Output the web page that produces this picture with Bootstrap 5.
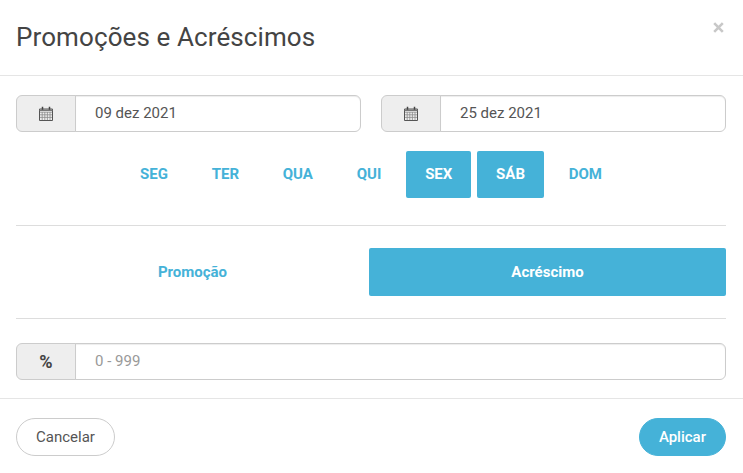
<!DOCTYPE html>
<html lang="pt">
<head>
  <meta charset="UTF-8" />
  <title>Promoções e Acréscimos</title>
  <meta name="viewport" content="width=device-width, initial-scale=1">
  <link href="https://cdn.jsdelivr.net/npm/bootstrap@5.3.0/dist/css/bootstrap.min.css" rel="stylesheet">

  <style>
    body {
      font-family: Roboto, "Liberation Sans", sans-serif;
      font-size: 15px;
      color: #555;
      background: #fff;
      height: 473px;
      overflow: hidden;
    }

    .promo-header {
      height: 76px;
      padding: 0 19px 0 16px;
      border-bottom: 1px solid #e5e5e5;
    }

    .promo-title {
      font-size: 26px;
      font-weight: 400;
      letter-spacing: .1px;
      color: #444;
      margin: 0;
    }

    .promo-close {
      background: none;
      border: 0;
      padding: 0;
      color: #c8c8c8;
      line-height: 1;
      margin-bottom: 21px;
      display: flex;
    }

    .promo-body {
      padding: 19px 17px 0 16px;
    }

    .promo-dates {
      gap: 20px;
    }

    .promo-field {
      height: 37px;
    }

    .promo-field .input-group-text {
      width: 60px;
      justify-content: center;
      padding: 0;
      background: #eee;
      border: 1px solid #ccc;
      border-radius: 6px 0 0 6px;
      color: #444;
    }

    .promo-field .form-control {
      font-size: 15px;
      color: #555;
      padding: 0 19px;
      border: 1px solid #ccc;
      border-radius: 0 6px 6px 0;
      box-shadow: inset 0 1px 1px rgba(0, 0, 0, .075);
    }

    .promo-field .form-control::placeholder {
      color: #999;
    }

    .promo-field .percent-sign {
      font-size: 18px;
      font-weight: 700;
    }

    .day-row {
      margin-top: 19px;
      gap: 6px;
    }

    .day-btn,
    .type-btn {
      font-size: 15px;
      font-weight: 700;
      color: #45b2d8;
      background: #fff;
      border: 0;
      border-radius: 2px;
    }

    .day-btn {
      height: 47px;
      padding: 0 18.9px;
    }

    .type-btn {
      height: 48px;
      padding: 0;
    }

    .day-btn.is-on,
    .type-btn.is-on {
      color: #fff;
      background: #45b2d8;
    }

    .promo-rule {
      margin: 0;
      border: 0;
      border-top: 1px solid #ddd;
      opacity: 1;
    }

    .rule-days {
      margin-top: 27px;
    }

    .type-row {
      margin-top: 22px;
      display: grid;
      grid-template-columns: 353px 357px;
    }

    .rule-type {
      margin-top: 22px;
    }

    .percent-row {
      margin-top: 24px;
    }

    .promo-footer {
      margin-top: 18px;
      padding: 19px 17px 0 16px;
      border-top: 1px solid #e5e5e5;
    }

    .foot-btn {
      height: 38px;
      font-size: 15px;
      padding: 0 19px;
      border-radius: 19px;
    }

    .foot-cancel {
      color: #555;
      background: #fff;
      border: 1px solid #ccc;
    }

    .foot-apply {
      color: #fff;
      font-weight: 500;
      background: #45b2d8;
      border: 1px solid #45b2d8;
    }
  </style>
</head>
<body>

  <!-- Header -->
  <div class="promo-header d-flex justify-content-between align-items-center">
    <h4 class="promo-title">Promoções e Acréscimos</h4>
    <button type="button" class="promo-close" aria-label="Fechar">
      <svg width="11" height="11" viewBox="0 0 11 11"><path d="M1.200 1.200l8.600 8.600M9.800 1.200l-8.600 8.600" stroke="currentColor" stroke-width="2.600" fill="none"/></svg>
    </button>
  </div>

  <div class="promo-body">
    <!-- Dates -->
    <div class="d-flex promo-dates">
      <div class="input-group promo-field">
        <span class="input-group-text">
          <svg width="14" height="15" viewBox="0 0 14 15"><path d="M.5 3h13v11.500H.5z" stroke="#555" fill="none"/><path d="M1 6.200h12M1 8.800h12M1 11.400h12M3.200 6v8M5.800 6v8M8.400 6v8M11 6v8" stroke="#8a8a8a" stroke-width=".8" fill="none"/><path d="M.5 3.500h13v1.500H.5z" fill="#777"/><path d="M3.500 .8v3M10.500 .8v3" stroke="#444" stroke-width="1.500" fill="none"/></svg>
        </span>
        <input type="text" class="form-control" value="09 dez 2021">
      </div>
      <div class="input-group promo-field">
        <span class="input-group-text">
          <svg width="14" height="15" viewBox="0 0 14 15"><path d="M.5 3h13v11.500H.5z" stroke="#555" fill="none"/><path d="M1 6.200h12M1 8.800h12M1 11.400h12M3.200 6v8M5.800 6v8M8.400 6v8M11 6v8" stroke="#8a8a8a" stroke-width=".8" fill="none"/><path d="M.5 3.500h13v1.500H.5z" fill="#777"/><path d="M3.500 .8v3M10.500 .8v3" stroke="#444" stroke-width="1.500" fill="none"/></svg>
        </span>
        <input type="text" class="form-control" value="25 dez 2021">
      </div>
    </div>

    <!-- Week days -->
    <div class="d-flex justify-content-center day-row">
      <button type="button" class="btn day-btn">SEG</button>
      <button type="button" class="btn day-btn">TER</button>
      <button type="button" class="btn day-btn">QUA</button>
      <button type="button" class="btn day-btn">QUI</button>
      <button type="button" class="btn day-btn is-on">SEX</button>
      <button type="button" class="btn day-btn is-on">SÁB</button>
      <button type="button" class="btn day-btn">DOM</button>
    </div>

    <hr class="promo-rule rule-days">

    <!-- Type -->
    <div class="type-row">
      <button type="button" class="btn type-btn">Promoção</button>
      <button type="button" class="btn type-btn is-on">Acréscimo</button>
    </div>

    <hr class="promo-rule rule-type">

    <!-- Percent -->
    <div class="input-group promo-field percent-row">
      <span class="input-group-text percent-sign">%</span>
      <input type="text" class="form-control" placeholder="0 - 999">
    </div>
  </div>

  <!-- Footer -->
  <div class="promo-footer d-flex justify-content-between">
    <button type="button" class="btn foot-btn foot-cancel">Cancelar</button>
    <button type="button" class="btn foot-btn foot-apply">Aplicar</button>
  </div>

</body>
</html>
